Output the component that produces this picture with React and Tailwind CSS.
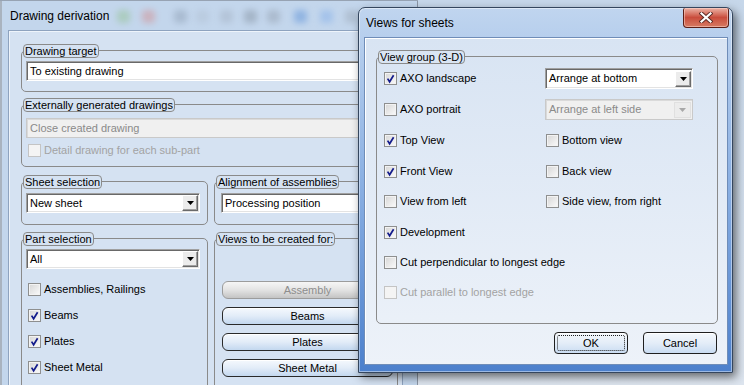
import React from "react";

function Check({ checked = false, disabled = false }) {
  return (
    <span
      className={
        disabled
          ? "relative inline-block h-[13px] w-[13px] shrink-0 border border-[#c4c4c4] bg-[#f4f4f4]"
          : "relative inline-block h-[13px] w-[13px] shrink-0 border border-[#8e8f8f] bg-linear-to-br from-[#d6d6d6] to-[#fbfbfb] shadow-[inset_0_0_0_1px_#f3f3f3]"
      }
    >
      {checked && (
        <svg viewBox="0 0 11 11" className="absolute left-0 top-0 h-[11px] w-[11px]">
          <path d="M2.6 5.6 L4.6 8.8 L8.6 2.2" fill="none" stroke="#141c8c" strokeWidth="1.7" strokeLinejoin="miter" />
        </svg>
      )}
    </span>
  );
}

function CheckRow({ label, checked, disabled }) {
  return (
    <div className="flex h-[13px] items-center gap-[3px]">
      <Check checked={checked} disabled={disabled} />
      <span className={disabled ? "leading-[13px] text-[#a3a3a3]" : "leading-[13px]"}>{label}</span>
    </div>
  );
}

function Arrow({ disabled }) {
  return (
    <span
      className={
        disabled
          ? "flex h-[16px] w-[17px] shrink-0 items-center justify-center border border-[#e0e0e0] bg-[#ececec]"
          : "flex h-[16px] w-[16px] shrink-0 items-center justify-center border border-t-white border-l-white border-r-[#6a6a6a] border-b-[#6a6a6a] bg-[#ececec] shadow-[inset_-1px_-1px_0_#a0a0a0]"
      }
    >
      <svg width="7" height="4" viewBox="0 0 7 4">
        <path d="M0 0H7L3.5 4Z" fill={disabled ? "#a8a8a8" : "#000"} />
      </svg>
    </span>
  );
}

function Combo({ text, disabled, arrow = true, className = "" }) {
  return (
    <div
      className={
        (disabled
          ? "flex items-center border border-[#c9c9c9] bg-[#f0f0f0] text-[#8a8a8a] shadow-[inset_1px_1px_0_#dadada] "
          : "flex items-center border border-t-[#a0a0a0] border-l-[#a0a0a0] border-b-white border-r-white bg-white shadow-[inset_1px_1px_0_#696969,inset_-1px_-1px_0_#e3e3e3] ") +
        className
      }
    >
      <span className="flex-1 truncate pl-[3px] leading-[13px]">{text}</span>
      {arrow && (
        <span className="mr-[1px]">
          <Arrow disabled={disabled} />
        </span>
      )}
    </div>
  );
}

function GroupBox({ label, className = "", labelBg = "bg-[#d5e2f2]", children }) {
  return (
    <div className={"relative rounded-[5px] border border-[#8a8a8a] " + className}>
      <span
        className={
          "absolute -top-[7px] left-[1px] h-[14px] whitespace-nowrap rounded-[4px] border border-[#8a8a8a] px-[1px] leading-[12px] " +
          labelBg
        }
      >
        {label}
      </span>
      {children}
    </div>
  );
}

function BackButton({ label, disabled }) {
  return (
    <div
      className={
        disabled
          ? "flex h-[18px] w-[171px] items-center justify-center rounded-[6px] border border-[#9c9c9c] bg-linear-to-b from-[#f6f6f6] via-[#e3e3e3] to-[#c4c4c4] text-[#8d8d8d]"
          : "flex h-[18px] w-[171px] items-center justify-center rounded-[6px] border border-[#2a2a2a] bg-linear-to-b from-[#f5f9fd] via-[#e2ecf8] to-[#c3d8ef] shadow-[inset_0_1px_0_#ffffff]"
      }
    >
      {label}
    </div>
  );
}

function DlgButton({ label, focused }) {
  return (
    <div className="relative flex h-[22px] w-[74px] items-center justify-center rounded-[4px] border border-[#1f1f1f] bg-linear-to-b from-[#f4f8fc] via-[#e4edf8] to-[#c9dcf2] shadow-[inset_0_1px_0_#ffffff]">
      {focused && <span className="absolute inset-[2px] rounded-[2px] border border-dotted border-[#202020]" />}
      <span className="relative">{label}</span>
    </div>
  );
}

function Blob({ className }) {
  return <span className={"absolute h-[13px] w-[13px] rounded-[3px] blur-[3px] " + className} />;
}

export default function App() {
  return (
    <div className="relative h-[385px] w-[744px] overflow-hidden bg-linear-to-b from-[#c6d7ea] to-[#dde5ef] font-['Liberation_Sans',Arial,sans-serif] text-[11px] text-black">
      {/* Back window: Drawing derivation */}
      <div className="absolute left-0 top-0 flex h-[420px] w-[418px] flex-col border-t border-[#97a3b3] bg-[#c3d6ec] shadow-[inset_2px_0_0_#a9b3bf,inset_-1px_0_0_#8b96a5]">
        <div className="relative flex h-[29px] shrink-0 items-center pl-[10px] text-[12px]">
          <span className="relative z-10">Drawing derivation</span>
          <Blob className="left-[117px] top-[9px] bg-[#8fbf8a] opacity-45" />
          <Blob className="left-[142px] top-[9px] bg-[#d48888] opacity-45" />
          <Blob className="left-[174px] top-[9px] bg-[#8a9bb0] opacity-45" />
          <Blob className="left-[196px] top-[9px] bg-[#b0bfd2] opacity-45" />
          <Blob className="left-[220px] top-[9px] bg-[#a2afc0] opacity-45" />
          <Blob className="left-[244px] top-[9px] bg-[#808d9c] opacity-45" />
          <Blob className="left-[267px] top-[9px] bg-[#8f9bab] opacity-45" />
          <Blob className="left-[294px] top-[9px] bg-[#5f93d8] opacity-50" />
          <Blob className="left-[320px] top-[9px] bg-[#86b0e8] opacity-50" />
          <Blob className="left-[345px] top-[9px] bg-[#95a0ae] opacity-40" />
        </div>
        <div className="ml-[8px] mr-[15px] flex flex-1 flex-col border border-[#8ea3bf] bg-[#d5e2f2] pl-[12px] pr-[4px] pt-[19px] shadow-[inset_1px_1px_0_#eef4fb]">
          <GroupBox label="Drawing target" className="px-[4px] pb-[10px] pt-[10px]">
            <Combo text="To existing drawing" arrow={false} className="h-[20px]" />
          </GroupBox>

          <GroupBox label="Externally generated drawings" className="mt-[12px] px-[4px] pb-[9px] pt-[13px]">
            <Combo text="Close created drawing" disabled arrow={false} className="h-[20px]" />
            <div className="ml-[2px] mt-[6px]">
              <CheckRow label="Detail drawing for each sub-part" disabled />
            </div>
          </GroupBox>

          <div className="mt-[14px] flex gap-[6px]">
            <GroupBox label="Sheet selection" className="w-[187px] pb-[11px] pl-[4px] pr-[7px] pt-[11px]">
              <Combo text="New sheet" className="h-[20px]" />
            </GroupBox>
            <GroupBox label="Alignment of assemblies" className="flex-1 pb-[11px] pl-[6px] pr-[4px] pt-[11px]">
              <Combo text="Processing position" className="h-[20px]" />
            </GroupBox>
          </div>

          <div className="mt-[13px] flex flex-1 gap-[6px]">
            <GroupBox label="Part selection" className="w-[187px] pl-[4px] pr-[7px] pt-[10px]">
              <Combo text="All" className="h-[20px]" />
              <div className="ml-[2px] mt-[14px] flex flex-col gap-[13px]">
                <CheckRow label="Assemblies, Railings" />
                <CheckRow label="Beams" checked />
                <CheckRow label="Plates" checked />
                <CheckRow label="Sheet Metal" checked />
              </div>
            </GroupBox>
            <GroupBox label="Views to be created for:" className="flex-1 pl-[7px] pt-[42px]">
              <div className="flex flex-col gap-[8px]">
                <BackButton label="Assembly" disabled />
                <BackButton label="Beams" />
                <BackButton label="Plates" />
                <BackButton label="Sheet Metal" />
              </div>
            </GroupBox>
          </div>
        </div>
      </div>

      {/* Dialog: Views for sheets */}
      <div className="absolute left-[358px] top-[7px] flex h-[366px] w-[375px] flex-col rounded-t-[7px] border border-[#34465e] bg-linear-to-b from-[#c0d5ef] via-[#88aee2] to-[#4c80cc] shadow-[3px_4px_10px_rgba(0,0,0,0.55),inset_0_0_0_1px_rgba(255,255,255,0.45)]">
        <div className="relative flex h-[29px] shrink-0 items-center pl-[7px] text-[12px]">
          <span>Views for sheets</span>
          <div className="absolute right-[3px] top-0 flex h-[20px] w-[46px] items-center justify-center rounded-b-[4px] rounded-t-[2px] border border-t-0 border-[#5c1e16] bg-linear-to-b from-[#eab2a6] via-[#c94c3c] to-[#d67a63] shadow-[inset_0_0_0_1px_rgba(255,220,210,0.5)]">
            <svg width="14" height="11" viewBox="0 0 14 11">
              <path d="M2.5 1.5 L11.5 9.5 M11.5 1.5 L2.5 9.5" stroke="#5a2a24" strokeWidth="4" strokeLinecap="square" />
              <path d="M2.5 1.5 L11.5 9.5 M11.5 1.5 L2.5 9.5" stroke="#ffffff" strokeWidth="2.2" strokeLinecap="square" />
            </svg>
          </div>
        </div>
        <div className="mb-[7px] ml-[5px] mr-[4px] flex flex-1 flex-col border border-[#6f8db8] bg-linear-to-b from-[#d8e4f3] to-[#edf2f9] pl-[11px] pr-[9px] pt-[18px] shadow-[inset_1px_1px_0_#ffffff]">
          <GroupBox label="View group (3-D)" labelBg="bg-[#d9e5f3]" className="h-[268px] pb-[16px] pl-[7px] pt-[6px]">
            <div className="grid grid-cols-[161px_1fr] grid-rows-[31px_31px_31px_30px_31px_30px_30px_30px] items-center">
              <CheckRow label="AXO landscape" checked />
              <Combo text="Arrange at bottom" className="h-[21px] w-[148px]" />
              <CheckRow label="AXO portrait" />
              <Combo text="Arrange at left side" disabled className="h-[21px] w-[148px]" />
              <CheckRow label="Top View" checked />
              <div className="ml-[1px]"><CheckRow label="Bottom view" /></div>
              <CheckRow label="Front View" checked />
              <div className="ml-[1px]"><CheckRow label="Back view" /></div>
              <CheckRow label="View from left" />
              <div className="ml-[1px]"><CheckRow label="Side view, from right" /></div>
              <div className="col-span-2"><CheckRow label="Development" checked /></div>
              <div className="col-span-2"><CheckRow label="Cut perpendicular to longest edge" /></div>
              <div className="col-span-2"><CheckRow label="Cut parallel to longest edge" disabled /></div>
            </div>
          </GroupBox>
          <div className="mt-[8px] flex justify-end gap-[15px] pr-[1px]">
            <DlgButton label="OK" focused />
            <DlgButton label="Cancel" />
          </div>
        </div>
      </div>
    </div>
  );
}
